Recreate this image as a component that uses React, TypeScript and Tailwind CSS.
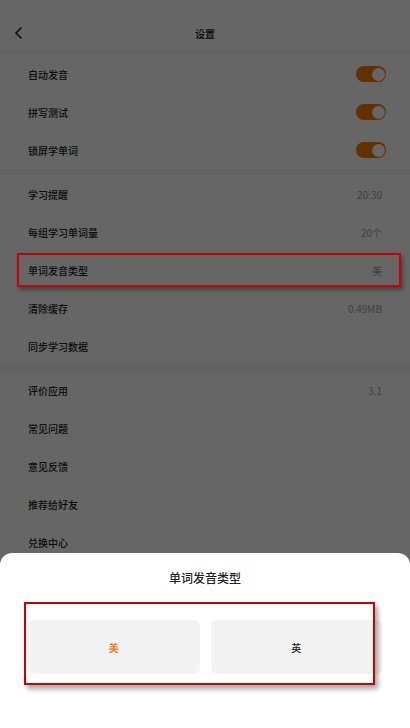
import React from "react";

type Row = { label: string; value?: string; toggle?: boolean };

const sections: Row[][] = [
  [
    { label: "自动发音", toggle: true },
    { label: "拼写测试", toggle: true },
    { label: "锁屏学单词", toggle: true },
  ],
  [
    { label: "学习提醒", value: "20:30" },
    { label: "每组学习单词量", value: "20个" },
    { label: "单词发音类型", value: "美" },
    { label: "清除缓存", value: "0.49MB" },
    { label: "同步学习数据" },
  ],
  [
    { label: "评价应用", value: "3.1" },
    { label: "常见问题" },
    { label: "意见反馈" },
    { label: "推荐给好友" },
    { label: "兑换中心" },
    { label: "关于我们" },
  ],
];

function Toggle() {
  return (
    <div className="w-[30px] h-[16px] rounded-full bg-[#f57a00] flex items-center justify-end pr-[1.5px]">
      <div className="w-[13px] h-[13px] rounded-full bg-white" />
    </div>
  );
}

export default function App() {
  return (
    <div
      className="relative w-[410px] h-[728px] overflow-hidden bg-[#f5f5f5]"
      style={{ fontFamily: '"Noto Sans CJK SC", "Noto Sans", sans-serif' }}
    >
      {/* header */}
      <div className="h-[50px] bg-white flex items-center relative">
        <svg
          className="absolute left-[14px] top-[26px]"
          width="10"
          height="14"
          viewBox="0 0 10 14"
          fill="none"
          stroke="#222"
          strokeWidth="1.6"
        >
          <path d="M7.5 1.5 L2 7 L7.5 12.5" />
        </svg>
        <div className="w-full text-center text-[10px] font-medium text-[#111] pt-[16px]">设置</div>
      </div>

      <div className="flex flex-col gap-[6px] pt-[5px]">
        {sections.map((sec, i) => (
          <div key={i} className="bg-white flex flex-col">
            {sec.map((r) => (
              <div
                key={r.label}
                className="h-[38px] flex items-center justify-between pl-[28px] pr-[28px]"
              >
                <span className="text-[10px] font-medium text-[#222]">{r.label}</span>
                {r.toggle ? (
                  <div className="-mr-[4px]">
                    <Toggle />
                  </div>
                ) : (
                  r.value && <span className="text-[10px] text-[#a0a0a0]">{r.value}</span>
                )}
              </div>
            ))}
          </div>
        ))}
      </div>

      {/* dim overlay */}
      <div className="absolute inset-0 bg-[rgba(0,0,0,0.6)]" />

      {/* annotation box on row */}
      <div className="absolute left-[17px] top-[253px] w-[384px] h-[34px] border-2 border-[#cc0000] shadow-[2px_3px_4px_rgba(0,0,0,0.35)]" />

      {/* bottom sheet */}
      <div className="absolute left-0 right-0 bottom-0 h-[175px] bg-white rounded-t-[12px] flex flex-col">
        <div className="h-[50px] flex items-center justify-center text-[12px] font-medium text-[#222]">
          单词发音类型
        </div>
        <div className="flex gap-[11px] pl-[28px] pr-[28px] pt-[17px]">
          <div className="flex-1 h-[54px] rounded-[6px] bg-[#f3f3f3] flex items-center justify-center text-[10px] font-medium text-[#ff6a00]">
            美
          </div>
          <div className="flex-1 h-[54px] rounded-[6px] bg-[#f3f3f3] flex items-center justify-center text-[10px] font-medium text-[#222]">
            英
          </div>
        </div>
      </div>

      {/* annotation box on buttons */}
      <div className="absolute left-[24px] top-[602px] w-[351px] h-[83px] border-2 border-[#cc0000] shadow-[3px_4px_5px_rgba(0,0,0,0.35)]" />
    </div>
  );
}
